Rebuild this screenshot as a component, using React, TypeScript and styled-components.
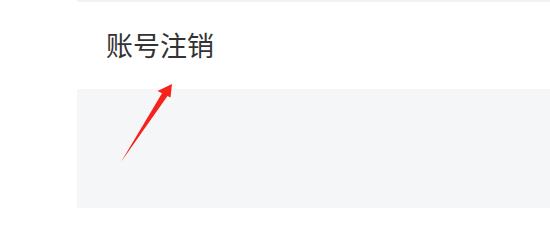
import React from "react";
import styled, { createGlobalStyle } from "styled-components";

const GlobalStyle = createGlobalStyle`
  html, body {
    margin: 0;
    padding: 0;
    background: #fff;
  }
  body {
    font-family: "Noto Sans CJK SC", "Noto Sans", sans-serif;
  }
`;

const Page = styled.div`
  position: relative;
  display: flex;
  flex-direction: row;
  width: 550px;
  height: 208px;
  overflow: hidden;
`;

const Sidebar = styled.div`
  width: 77px;
  flex-shrink: 0;
  background: #fff;
`;

const Main = styled.div`
  flex: 1;
  display: flex;
  flex-direction: column;
  border-top: 2px solid #f1f2f4;
`;

const Header = styled.div`
  height: 87px;
  display: flex;
  align-items: center;
  padding-left: 29px;
  background: #fff;
`;

const Title = styled.h1`
  margin: 0;
  font-size: 27px;
  font-weight: 400;
  color: #333;
  line-height: 1;
  padding-bottom: 2px;
`;

const Content = styled.div`
  flex: 1;
  background: #f5f6f8;
`;

const Arrow = styled.svg`
  position: absolute;
  left: 0;
  top: 0;
  pointer-events: none;
`;

export default function App() {
  return (
    <>
      <GlobalStyle />
      <Page>
        <Sidebar />
        <Main>
          <Header>
            <Title>账号注销</Title>
          </Header>
          <Content />
        </Main>
        <Arrow width="550" height="208" viewBox="0 0 550 208">
          <polygon
            points="121,162 162,93.2 157.5,91 172,84 170.5,97.5 167.5,96"
            fill="#f5231b"
          />
        </Arrow>
      </Page>
    </>
  );
}
